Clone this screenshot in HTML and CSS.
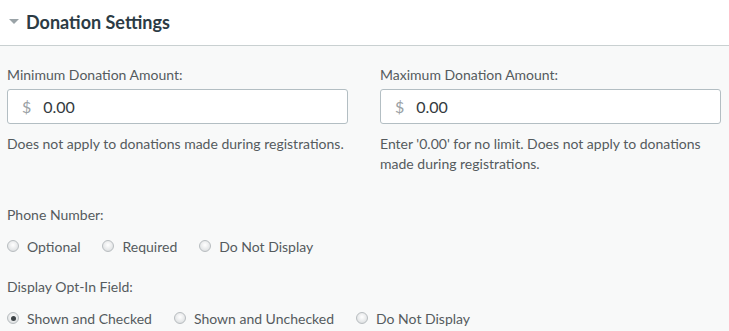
FILE: index.html
```html
<!DOCTYPE html>
<html>
<head>
<meta charset="utf-8">
<link rel="stylesheet" href="styles.css">
</head>
<body>
<div class="panel">
  <div class="panel-header">
    <span class="caret"></span>
    <h2 class="title">Donation Settings</h2>
  </div>
  <div class="panel-body">
    <div class="amounts">
      <div class="field">
        <div class="label">Minimum Donation Amount:</div>
        <div class="input"><span class="cur">$</span><span class="val">0.00</span></div>
        <div class="help">Does not apply to donations made during registrations.</div>
      </div>
      <div class="field">
        <div class="label">Maximum Donation Amount:</div>
        <div class="input"><span class="cur">$</span><span class="val">0.00</span></div>
        <div class="help">Enter '0.00' for no limit. Does not apply to donations made during registrations.</div>
      </div>
    </div>
    <div class="group phone">
      <div class="label">Phone Number:</div>
      <div class="radios">
        <label class="radio"><span class="dot"></span>Optional</label>
        <label class="radio"><span class="dot"></span>Required</label>
        <label class="radio"><span class="dot"></span>Do Not Display</label>
      </div>
    </div>
    <div class="group optin">
      <div class="label">Display Opt-In Field:</div>
      <div class="radios">
        <label class="radio"><span class="dot checked"></span>Shown and Checked</label>
        <label class="radio"><span class="dot"></span>Shown and Unchecked</label>
        <label class="radio"><span class="dot"></span>Do Not Display</label>
      </div>
    </div>
  </div>
</div>
</body>
</html>
```

FILE: styles.css
```css
html, body {
  margin: 0;
  padding: 0;
  background: #f8f9f9;
}
body {
  font-family: Lato, "Open Sans", Arial, sans-serif;
  color: #555b5e;
  width: 729px;
  height: 331px;
  overflow: hidden;
}
.panel-header {
  height: 45px;
  background: #ffffff;
  border-bottom: 1px solid #c9d0d1;
  display: flex;
  align-items: center;
  padding-left: 9px;
  box-sizing: content-box;
}
.caret {
  width: 0;
  height: 0;
  border-left: 5px solid transparent;
  border-right: 5px solid transparent;
  border-top: 5px solid #9aa3a7;
  margin-right: 7px;
  margin-top: -3px;
}
.title {
  margin: 0;
  font-size: 18px;
  font-weight: 700;
  color: #2c3b44;
  margin-top: -2px;
}
.panel-body {
  padding: 19px 8px 0 7px;
}
.amounts {
  display: grid;
  grid-template-columns: 341px 341px;
  column-gap: 32px;
}
.label {
  font-size: 14px;
  line-height: 20px;
  color: #555b5e;
}
.input {
  margin-top: 4px;
  height: 33px;
  border: 1px solid #b3bec3;
  border-radius: 3px;
  background: #ffffff;
  display: flex;
  align-items: center;
  padding-left: 14px;
  font-size: 16px;
}
.cur {
  color: #9aa1a5;
  margin-right: 12px;
}
.val {
  color: #333a3e;
}
.help {
  margin-top: 10px;
  font-size: 14px;
  line-height: 20px;
  color: #555b5e;
}
.group.phone {
  margin-top: 31px;
}
.group.optin {
  margin-top: 20px;
}
.radios {
  display: flex;
  margin-top: 12px;
}
.radio {
  display: flex;
  align-items: center;
  font-size: 14px;
  line-height: 20px;
  color: #555b5e;
  margin-right: 22px;
}
.dot {
  width: 12px;
  height: 12px;
  border-radius: 50%;
  box-sizing: border-box;
  border: 1px solid #b8bdc0;
  background: radial-gradient(circle at 50% 40%, #ffffff 0%, #e6e8e9 60%, #cfd3d5 100%);
  margin-right: 8px;
  margin-top: -2px;
  position: relative;
}
.dot.checked::after {
  content: "";
  position: absolute;
  left: 2.5px;
  top: 2.5px;
  width: 5px;
  height: 5px;
  border-radius: 50%;
  background: #3d4346;
}
```
